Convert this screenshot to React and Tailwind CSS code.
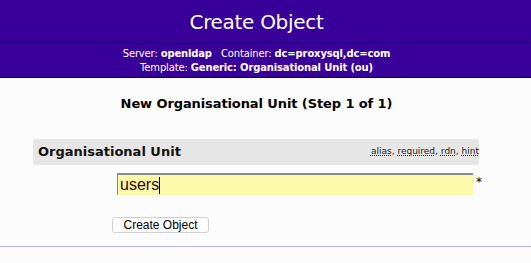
export default function App() {
  const v = { fontFamily: '"DejaVu Sans", Verdana, sans-serif' };
  const a = { fontFamily: '"Liberation Sans", Arial, sans-serif' };
  return (
    <div className="w-[531px] h-[263px] bg-[#fcfcfc] overflow-hidden" style={v}>
      <div className="h-[44px] bg-[#390099] border-b border-black flex items-center justify-center pr-[18px]">
        <span className="text-white text-[20px] leading-none tracking-[-0.3px]">Create Object</span>
      </div>
      <div className="h-[34px] bg-[#390099] border-b border-black flex flex-col items-center justify-center pr-[18px] text-white text-[10px] leading-[14px] tracking-[-0.15px]">
        <div>
          Server: <b>openldap</b>&nbsp;&nbsp; Container: <b>dc=proxysql,dc=com</b>
        </div>
        <div>
          Template: <b>Generic: Organisational Unit (ou)</b>
        </div>
      </div>
      <div className="pt-[18px] pr-[18px] text-center font-bold text-[13px] leading-[16px] text-black tracking-[-0.1px]">
        New Organisational Unit (Step 1 of 1)
      </div>
      <div className="ml-[33px] w-[446px] mt-[27px] h-[26px] bg-[#e6e6e6] flex items-center justify-between pl-[5px]">
        <span className="font-bold text-[13px] text-[#111]">Organisational Unit</span>
        <span className="text-[9px] text-[#222]">
          <span className="underline decoration-dotted">alias</span>,{" "}
          <span className="underline decoration-dotted">required</span>,{" "}
          <span className="underline decoration-dotted">rdn</span>,{" "}
          <span className="underline decoration-dotted">hint</span>
        </span>
      </div>
      <div className="flex items-start mt-[8px] ml-[117px]">
        <div
          className="w-[356px] h-[22px] bg-[#fafaaa] border-t-2 border-l border-[#8a8a8a] flex items-center pl-[2px] text-[16px] text-[#3a0000]"
          style={a}
        >
          users<span className="inline-block w-px h-[17px] bg-black"></span>
        </div>
        <span className="ml-[3px] mt-[0px] text-[12px] text-black">*</span>
      </div>
      <div className="ml-[112px] mt-[22px]">
        <div
          className="w-[97px] h-[16px] bg-white border border-[#d0d0d0] rounded-[3px] flex items-center justify-center text-[12px] text-black"
          style={a}
        >
          Create Object
        </div>
      </div>
      <div className="mt-[13px] h-px bg-[#bcb4d6]"></div>
    </div>
  );
}
